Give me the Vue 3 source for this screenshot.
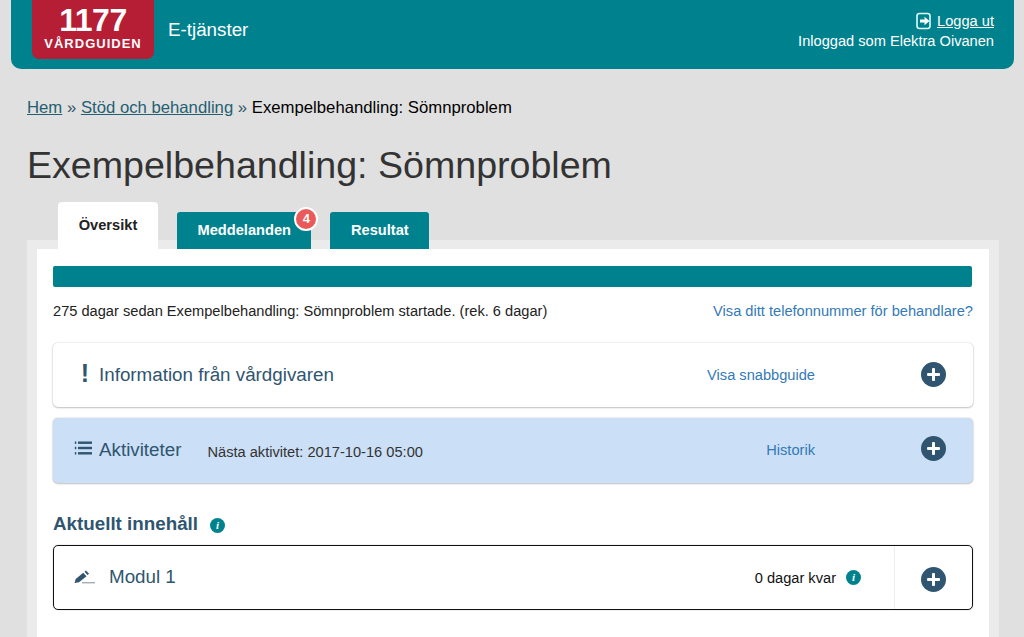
<script setup>
const tabs = [
  { label: 'Översikt', active: true },
  { label: 'Meddelanden', badge: 4 },
  { label: 'Resultat' }
]
</script>

<template>
  <div class="page">
    <header class="header">
      <div class="brand">
        <div class="logo">
          <span class="logo-num">1177</span>
          <span class="logo-name">VÅRDGUIDEN</span>
        </div>
        <span class="service">E-tjänster</span>
      </div>
      <div class="user">
        <div class="logout">
          <svg class="logout-icon" width="16" height="18" viewBox="0 0 16 18">
            <rect x="1" y="1.500" width="13" height="15" rx="2.500" fill="none" stroke="#dff" stroke-width="1.600" />
            <path d="M4 7.500H8.500V4.800L13.500 9L8.500 13.200V10.500H4Z" fill="#fff" />
          </svg>
          <a class="logout-link">Logga ut</a>
        </div>
        <div class="signed">Inloggad som Elektra Oivanen</div>
      </div>
    </header>

    <nav class="crumbs">
      <a>Hem</a> <span>»</span> <a>Stöd och behandling</a> <span>»</span> <span class="current">Exempelbehandling: Sömnproblem</span>
    </nav>

    <h1 class="title">Exempelbehandling: Sömnproblem</h1>

    <div class="tabs">
      <div v-for="t in tabs" :key="t.label" class="tab" :class="{ active: t.active }">
        {{ t.label }}
        <span v-if="t.badge" class="badge">{{ t.badge }}</span>
      </div>
    </div>

    <div class="outer">
      <main class="panel">
        <div class="progress"></div>
        <div class="status">
          <span>275 dagar sedan Exempelbehandling: Sömnproblem startade. (rek. 6 dagar)</span>
          <a class="link">Visa ditt telefonnummer för behandlare?</a>
        </div>

        <section class="card">
          <div class="card-left">
            <span class="bang">!</span>
            <span class="card-title">Information från vårdgivaren</span>
          </div>
          <a class="card-link">Visa snabbguide</a>
          <span class="plus"></span>
        </section>

        <section class="card blue">
          <div class="card-left">
            <svg class="list-icon" width="18" height="14" viewBox="0 0 18 14">
              <g fill="#2f5570">
                <rect x="4" y="0.500" width="14" height="2.400" />
                <rect x="4" y="5.800" width="14" height="2.400" />
                <rect x="4" y="11.100" width="14" height="2.400" />
                <rect x="0.800" y="0.500" width="1.500" height="2.400" />
                <rect x="0.800" y="5.800" width="1.500" height="2.400" />
                <rect x="0.800" y="11.100" width="1.500" height="2.400" />
              </g>
            </svg>
            <span class="card-title">Aktiviteter</span>
            <span class="next">Nästa aktivitet: 2017-10-16 05:00</span>
          </div>
          <a class="card-link">Historik</a>
          <span class="plus"></span>
        </section>

        <h2 class="section-title">
          Aktuellt innehåll
          <span class="info">i</span>
        </h2>

        <section class="module">
          <div class="module-main">
            <svg class="pen" width="21" height="14" viewBox="0 0 21 14">
              <path d="M0.500 13L1.700 9L9.200 2.800L12.500 6.300L5 12.300Z" fill="#2f5570" />
              <path d="M10.500 1.700L12 0.500L15 3.700L13.600 5.100Z" fill="#2f5570" />
              <rect x="8" y="12.300" width="13" height="1" fill="#7d8f9c" />
            </svg>
            <span class="module-title">Modul 1</span>
            <span class="days">0 dagar kvar</span>
            <span class="info small">i</span>
          </div>
          <div class="module-side"><span class="plus"></span></div>
        </section>
      </main>
    </div>
  </div>
</template>

<style>
html, body { margin: 0; background: #e0e0e0; overflow: hidden; }
</style>

<style scoped>
.page {
  width: 1024px;
  height: 637px;
  overflow: hidden;
  background: #e0e0e0;
  font-family: "Liberation Sans", Arial, sans-serif;
  color: #333;
}
a { cursor: pointer; }

.header {
  margin: 0 10px 0 11px;
  height: 69px;
  box-sizing: border-box;
  background: #00828e;
  border-radius: 0 0 10px 10px;
  display: flex;
  justify-content: space-between;
  padding: 0 20px 0 21px;
  color: #fff;
}
.brand { display: flex; align-items: flex-start; }
.logo {
  width: 122px;
  height: 59px;
  background: #b61e35;
  border-radius: 0 0 7px 7px;
  display: flex;
  flex-direction: column;
  align-items: center;
  color: #fff;
}
.logo-num {
  font: 700 32px/28px "Liberation Sans", sans-serif;
  letter-spacing: -0.500px;
  margin-top: 6px;
}
.logo-name {
  font: 700 13px/14px "Liberation Sans", sans-serif;
  letter-spacing: 1px;
  margin-top: 3px;
}
.service { font-size: 18.800px; line-height: 21px; margin: 19px 0 0 14px; }
.user { text-align: right; font-size: 14.630px; line-height: 20px; padding-top: 11px; }
.logout { display: flex; justify-content: flex-end; align-items: center; gap: 5px; }
.logout-link { color: #fff; text-decoration: underline; }
.signed { margin-top: 0; }

.crumbs { margin: 29px 0 0 27px; font-size: 16.720px; line-height: 20px; color: #35566a; }
.crumbs a { color: #245f72; text-decoration: underline; }
.crumbs .current { color: #000; }

.title {
  margin: 27px 0 0 27px;
  font-size: 37.600px;
  line-height: 40px;
  font-weight: 400;
  color: #333;
}

.tabs { display: flex; align-items: flex-end; gap: 19px; margin: 17px 0 0 58px; height: 47px; }
.tab {
  position: relative;
  height: 37px;
  line-height: 36px;
  padding: 0 20.500px;
  box-sizing: border-box;
  background: #00828e;
  color: #fff;
  font-size: 14.630px;
  font-weight: 700;
  border-radius: 3px 3px 0 0;
}
.tab.active {
  height: 47px;
  width: 100px;
  padding: 0;
  text-align: center;
  line-height: 47px;
  background: #fff;
  color: #222;
  border-radius: 4px 4px 0 0;
}
.badge {
  position: absolute;
  top: -5px;
  right: -7px;
  width: 20px;
  height: 20px;
  border: 2px solid #fff;
  border-radius: 50%;
  background: #ea5a5a;
  color: #fff;
  font-size: 13px;
  line-height: 20px;
  text-align: center;
}

.outer {
  margin: -9px 25px 0 27px;
  padding: 9px 10px 0;
  background: #ebebeb;
}
.panel {
  background: #fff;
  padding: 17px 16px 40px;
  height: 400px;
  box-sizing: border-box;
}
.progress { height: 21px; background: #00828e; border-radius: 2px; margin-right: 1px; }
.status {
  display: flex;
  justify-content: space-between;
  font-size: 14.630px;
  line-height: 20px;
  margin-top: 14px;
  color: #222;
}
.link { color: #337ab7; }

.card {
  margin-top: 22px;
  height: 64px;
  box-sizing: border-box;
  background: #fff;
  border-radius: 5px;
  box-shadow: 0 0 2px rgba(0, 0, 0, 0.2), 0 1px 2px rgba(0, 0, 0, 0.2);
  display: flex;
  align-items: center;
  padding: 0 27px 0 0;
}
.card.blue {
  margin-top: 11px;
  height: 65px;
  background: #cbdff6;
}
.card-left { flex: 1; display: flex; align-items: center; }
.blue .card-left { margin-top: -2px; }
.bang {
  width: 46px;
  text-align: right;
  font-size: 25px;
  font-weight: 700;
  color: #2f5570;
  padding-right: 10px;
  box-sizing: border-box;
  line-height: 24px;
  margin-top: -4px;
}
.card-title { font-size: 18.800px; color: #2f5570; }
.list-icon { margin: -3px 7px 0 21px; }
.next { font-size: 14.630px; color: #333; margin: 4px 0 0 26px; }
.card-link { font-size: 14.630px; color: #337ab7; margin-right: 106px; }
.blue .card-link { margin-top: -2px; }
.plus {
  position: relative;
  display: block;
  flex: none;
  width: 25px;
  height: 25px;
  border-radius: 50%;
  background: #2f5570;
}
.card > .plus { margin-top: -2px; }
.blue > .plus { margin-top: -4px; }
.plus::before, .plus::after {
  content: "";
  position: absolute;
  background: #fff;
  border-radius: 1px;
}
.plus::before { left: 6px; right: 6px; top: 11px; height: 3px; }
.plus::after { top: 6px; bottom: 6px; left: 11px; width: 3px; }

.section-title {
  margin: 30px 0 0;
  font-size: 18.800px;
  line-height: 21px;
  font-weight: 700;
  color: #2f5570;
  display: flex;
  align-items: center;
}
.info {
  width: 15px;
  height: 15px;
  border-radius: 50%;
  background: #00828e;
  color: #fff;
  font: italic 700 11px/15px "Liberation Serif", serif;
  text-align: center;
  margin-left: 12px;
  display: inline-block;
  flex: none;
}
.section-title .info { margin-top: 4px; }
.module {
  margin-top: 11px;
  height: 65px;
  box-sizing: border-box;
  border: 1px solid #111;
  border-radius: 5px;
  box-shadow: 0 0 1px rgba(0, 0, 0, 0.5);
  display: flex;
}
.module-main { flex: 1; display: flex; align-items: center; padding: 0 33px 0 20px; }
.pen { flex: none; margin-top: -2px; }
.module-title { font-size: 18.800px; color: #2f5570; margin: -2px 0 0 14px; flex: 1; }
.days { font-size: 14.630px; color: #111; }
.info.small { margin-left: 10px; }
.module-side {
  width: 78px;
  border-left: 1px solid #eee;
  display: flex;
  align-items: center;
  justify-content: center;
  padding-top: 4px;
  box-sizing: border-box;
}
</style>
